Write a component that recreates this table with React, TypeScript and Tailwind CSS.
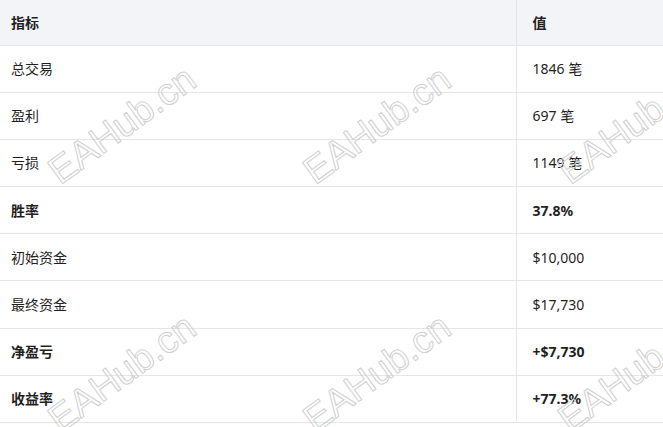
import React from 'react';

const rows = [
  { label: '总交易', value: '1846 笔', bold: false },
  { label: '盈利', value: '697 笔', bold: false },
  { label: '亏损', value: '1149 笔', bold: false },
  { label: '胜率', value: '37.8%', bold: true },
  { label: '初始资金', value: '$10,000', bold: false },
  { label: '最终资金', value: '$17,730', bold: false },
  { label: '净盈亏', value: '+$7,730', bold: true },
  { label: '收益率', value: '+77.3%', bold: true },
];

const marks = [
  { left: 122, top: 125 },
  { left: 377, top: 125 },
  { left: 632, top: 125 },
  { left: 122, top: 373 },
  { left: 377, top: 373 },
  { left: 632, top: 373 },
];

export default function App() {
  return (
    <div className="relative w-[663px] h-[427px] overflow-hidden bg-white font-['Noto_Sans','Noto_Sans_CJK_SC',sans-serif] text-[14px] text-[#1f1f1f]">
      <table className="w-[720px] border-collapse table-fixed">
        <colgroup>
          <col className="w-[516px]" />
          <col />
        </colgroup>
        <thead>
          <tr className="h-[45px] bg-[#f3f4f8] border-b border-[#e3e4e8]">
            <th className="pl-[11px] text-left font-bold border-r border-[#e3e4e8]">指标</th>
            <th className="pl-4 text-left font-bold">值</th>
          </tr>
        </thead>
        <tbody>
          {rows.map((row) => (
            <tr key={row.label} className="h-[47.2px] border-b border-[#e6e6e6]">
              <td className={`pl-[11px] border-r border-[#e6e6e6] ${row.bold ? 'font-bold' : ''}`}>{row.label}</td>
              <td className={`pl-4 ${row.bold ? 'font-bold' : ''}`}>{row.value}</td>
            </tr>
          ))}
        </tbody>
      </table>

      {/* watermark overlay */}
      <div className="pointer-events-none absolute inset-0">
        {marks.map((m, i) => (
          <span
            key={i}
            className="absolute -translate-x-1/2 -translate-y-1/2 -rotate-[36deg] whitespace-nowrap font-['Liberation_Sans',sans-serif] text-[38px] text-transparent [-webkit-text-stroke:1px_#cfcfcf]"
            style={{ left: m.left, top: m.top }}
          >
            EAHub.cn
          </span>
        ))}
      </div>
    </div>
  );
}
